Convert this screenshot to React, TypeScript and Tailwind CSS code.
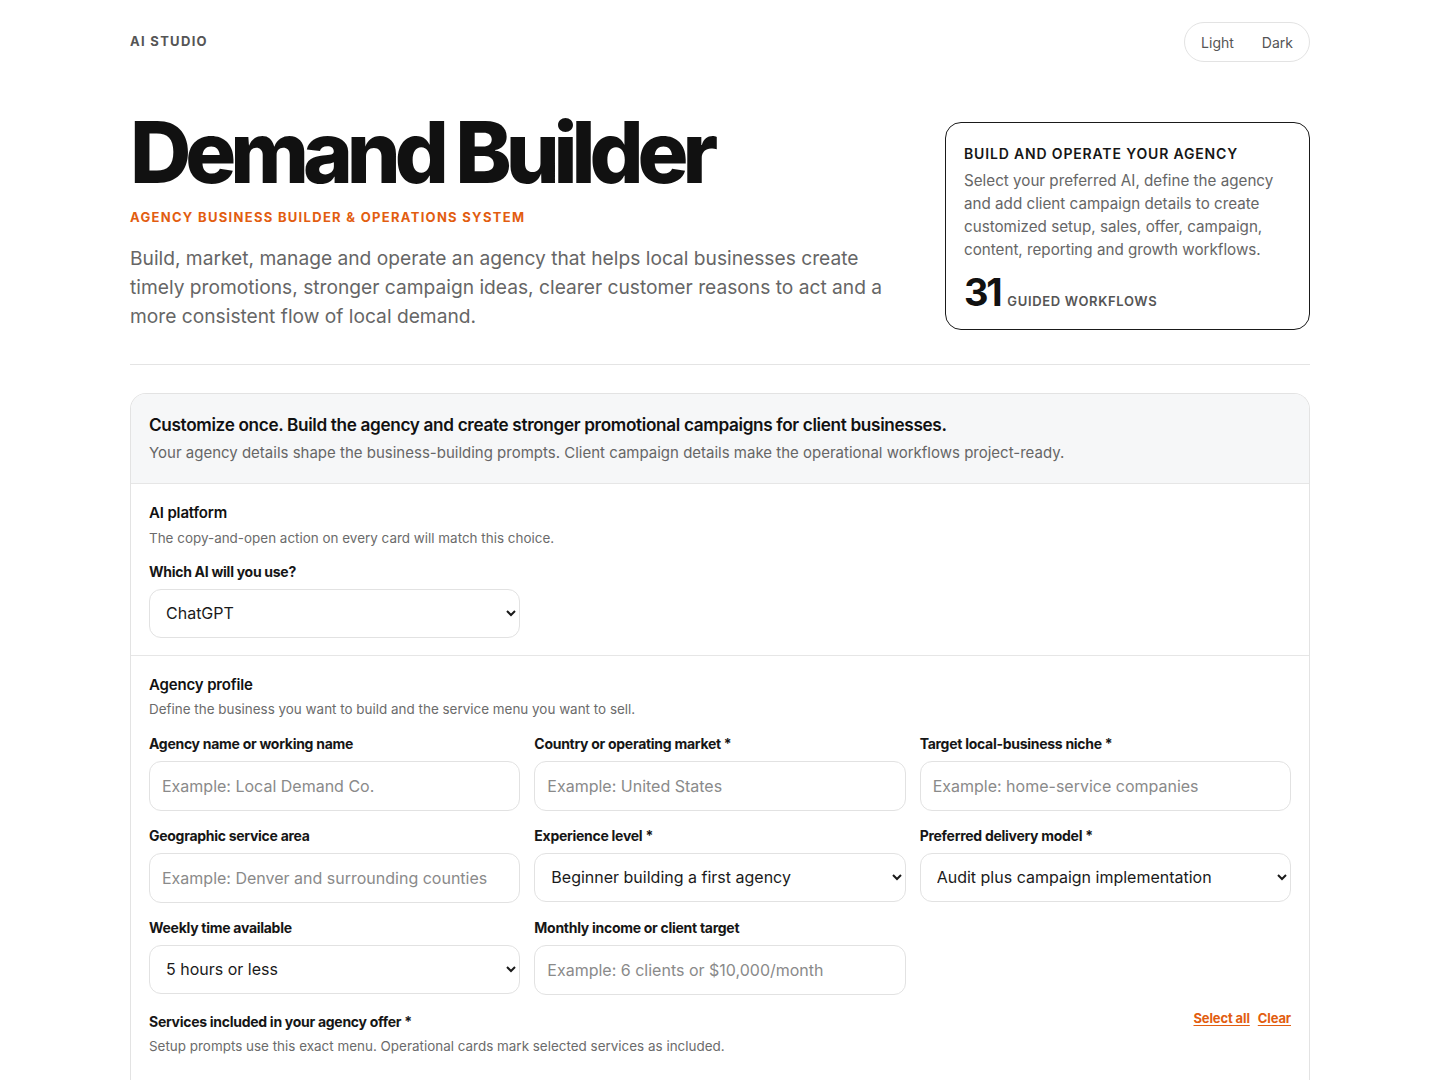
import React from 'react';

const font = { fontFamily: 'Inter, "Liberation Sans", Arial, sans-serif' };

function Label({ children }: { children: React.ReactNode }) {
  return (
    <label className="block text-[14px] font-bold leading-[18px] tracking-[-0.02em] text-[#161616]">
      {children}
    </label>
  );
}

function TextField({ label, placeholder }: { label: string; placeholder: string }) {
  return (
    <div className="flex flex-col gap-[8px]">
      <Label>{label}</Label>
      <input
        type="text"
        placeholder={placeholder}
        className="h-[50px] w-full rounded-[12px] border border-[#e2e2e2] bg-white px-[12px] text-[16px] text-[#1a1a1a] placeholder:text-[#8a8a8a] focus:outline-none"
      />
    </div>
  );
}

function SelectField({ label, value, options }: { label: string; value: string; options: string[] }) {
  return (
    <div className="flex flex-col gap-[8px]">
      <Label>{label}</Label>
      <select
        defaultValue={value}
        className="h-[49px] w-full rounded-[12px] border border-[#e2e2e2] bg-white px-[12px] text-[16px] text-[#1a1a1a] focus:outline-none"
      >
        {options.map((o) => (
          <option key={o}>{o}</option>
        ))}
      </select>
    </div>
  );
}

export default function App() {
  return (
    <div className="min-h-screen bg-white" style={font}>
      <div className="mx-auto w-[1180px]">
        {/* Top bar */}
        <header className="flex h-[84px] items-center justify-between">
          <span className="text-[13px] font-bold tracking-[0.1em] text-[#555]">AI STUDIO</span>
          <div className="flex h-[40px] items-center gap-[28px] rounded-full border border-[#e3e3e3] px-[16px] text-[14px] text-[#555]">
            <button>Light</button>
            <button>Dark</button>
          </div>
        </header>

        {/* Hero */}
        <section className="flex items-start justify-between pt-[26px]">
          <div className="w-[760px]">
            <h1 className="text-[85px] font-extrabold leading-[85px] tracking-[-0.072em] text-[#111]">
              Demand Builder
            </h1>
            <p className="mt-[13px] text-[13px] font-bold leading-[19.5px] tracking-[0.1em] text-[#e25d10]">
              AGENCY BUSINESS BUILDER &amp; OPERATIONS SYSTEM
            </p>
            <p className="mt-[16px] text-[19.2px] leading-[29px] text-[#666]">
              Build, market, manage and operate an agency that helps local businesses create timely promotions, stronger
              campaign ideas, clearer customer reasons to act and a more consistent flow of local demand.
            </p>
          </div>
          <div className="mt-[12px] w-[365px] rounded-[16px] border border-[#1a1a1a] px-[18px] pb-[17px] pt-[20px]">
            <h2 className="text-[14px] font-semibold tracking-[0.06em] text-[#161616]">BUILD AND OPERATE YOUR AGENCY</h2>
            <p className="mt-[5px] text-[15.2px] leading-[23px] text-[#666]">
              Select your preferred AI, define the agency and add client campaign details to create customized setup,
              sales, offer, campaign, content, reporting and growth workflows.
            </p>
            <div className="mt-[11px] flex items-baseline gap-[7px]">
              <span className="text-[38px] font-bold leading-[40px] tracking-[-0.06em] text-[#111]">31</span>
              <span className="text-[13px] font-semibold tracking-[0.05em] text-[#555]">GUIDED WORKFLOWS</span>
            </div>
          </div>
        </section>

        <div className="mt-[33px] h-px bg-[#e4e4e4]" />

        {/* Settings panel */}
        <section className="mt-[28px] overflow-hidden rounded-t-[16px] border border-b-0 border-[#e3e3e3]">
          <div className="border-b border-[#e6e6e6] bg-[#f6f7f8] px-[18px] pb-[19px] pt-[19px]">
            <h3 className="text-[17.2px] font-semibold leading-[24px] tracking-[-0.02em] text-[#111]">
              Customize once. Build the agency and create stronger promotional campaigns for client businesses.
            </h3>
            <p className="mt-[5px] text-[15px] leading-[22px] text-[#666]">
              Your agency details shape the business-building prompts. Client campaign details make the operational
              workflows project-ready.
            </p>
          </div>

          <div className="border-b border-[#e6e6e6] px-[18px] pb-[17px] pt-[19px]">
            <h4 className="text-[15px] font-semibold leading-[20px] tracking-[-0.01em] text-[#111]">AI platform</h4>
            <p className="mt-[6px] text-[13.45px] leading-[19px] text-[#6b6b6b]">
              The copy-and-open action on every card will match this choice.
            </p>
            <div className="mt-[15px] w-[371px]">
              <SelectField label="Which AI will you use?" value="ChatGPT" options={['ChatGPT', 'Claude', 'Gemini', 'Copilot']} />
            </div>
          </div>

          <div className="px-[18px] pb-[26px] pt-[19px]">
            <h4 className="text-[15px] font-semibold leading-[20px] tracking-[-0.01em] text-[#111]">Agency profile</h4>
            <p className="mt-[5px] text-[13.45px] leading-[19px] text-[#6b6b6b]">
              Define the business you want to build and the service menu you want to sell.
            </p>
            <div className="mt-[16px] grid grid-cols-3 gap-x-[14px] gap-y-[16px]">
              <TextField label="Agency name or working name" placeholder="Example: Local Demand Co." />
              <TextField label="Country or operating market *" placeholder="Example: United States" />
              <TextField label="Target local-business niche *" placeholder="Example: home-service companies" />
              <TextField label="Geographic service area" placeholder="Example: Denver and surrounding counties" />
              <SelectField
                label="Experience level *"
                value="Beginner building a first agency"
                options={['Beginner building a first agency', 'Some freelance experience', 'Established agency']}
              />
              <SelectField
                label="Preferred delivery model *"
                value="Audit plus campaign implementation"
                options={['Audit plus campaign implementation', 'Done-for-you retainer', 'Consulting only']}
              />
              <SelectField
                label="Weekly time available"
                value="5 hours or less"
                options={['5 hours or less', '5 to 10 hours', '10 to 20 hours', '20+ hours']}
              />
              <TextField label="Monthly income or client target" placeholder="Example: 6 clients or $10,000/month" />
            </div>
            <div className="mt-[18px] flex items-start justify-between">
              <div>
                <Label>Services included in your agency offer *</Label>
                <p className="mt-[6px] text-[13.45px] leading-[19px] text-[#6b6b6b]">
                  Setup prompts use this exact menu. Operational cards mark selected services as included.
                </p>
              </div>
              <div className="-mt-[4px] flex gap-[8px] text-[13px] font-bold tracking-[-0.01em] text-[#e25d10]">
                <button className="underline underline-offset-2">Select all</button>
                <button className="underline underline-offset-2">Clear</button>
              </div>
            </div>
            <div className="h-[60px]" />
          </div>
        </section>
      </div>
    </div>
  );
}
